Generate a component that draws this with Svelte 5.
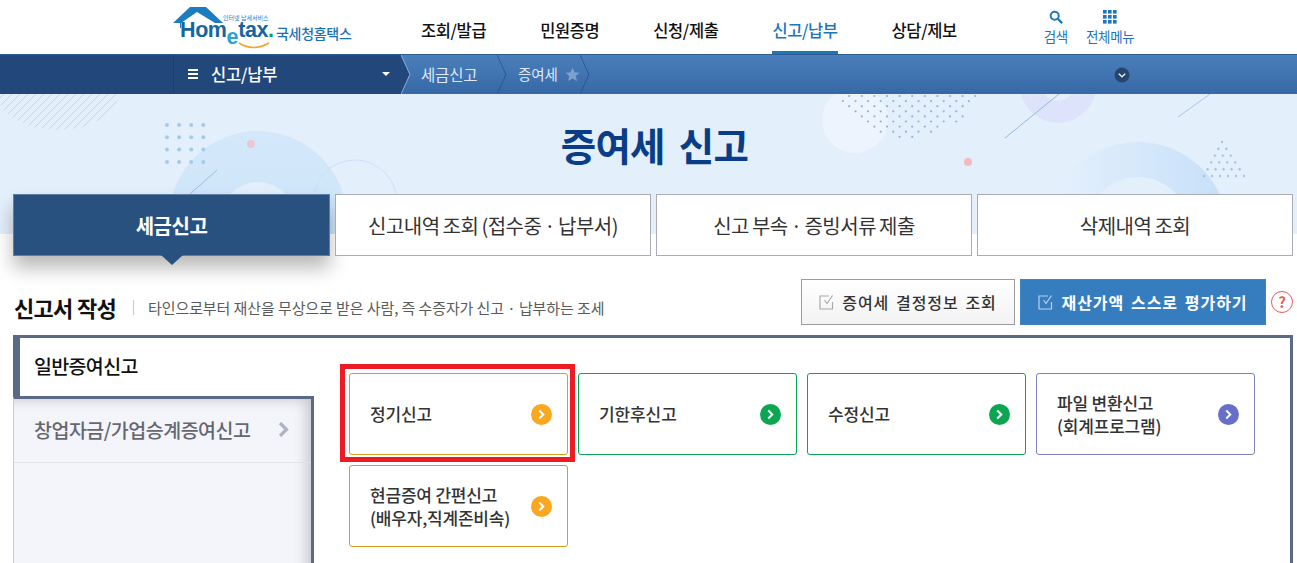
<script>
  const nav = [
    { label: '조회/발급' },
    { label: '민원증명' },
    { label: '신청/제출' },
    { label: '신고/납부', active: true },
    { label: '상담/제보' }
  ];
  const tabs = ['세금신고', '신고내역 조회 (접수중 · 납부서)', '신고 부속 · 증빙서류 제출', '삭제내역 조회'];
  const cards = [
    { lines: ['정기신고'], tone: 'gold', marked: true },
    { lines: ['기한후신고'], tone: 'green' },
    { lines: ['수정신고'], tone: 'green' },
    { lines: ['파일 변환신고', '(회계프로그램)'], tone: 'violet' },
    { lines: ['현금증여 간편신고', '(배우자,직계존비속)'], tone: 'gold' }
  ];
  const dotsA = [];
  for (let r = 0; r < 4; r++) for (let c = 0; c < 4; c++) dotsA.push([167 + c * 12.1, 125 + r * 12.3]);
  const dotsB = [];
  for (let r = 0; r < 9; r++) {
    const y = 96 + r * 5.1;
    const half = Math.sqrt(Math.max(0, 6400 - (y - 58) * (y - 58)));
    for (let x = -84 + (r % 2) * 6.3; x <= 84; x += 12.6) {
      if (Math.abs(x) < half) dotsB.push([908 + x, y]);
    }
  }
  const dotsC = [];
  for (let r = 0; r < 6; r++) {
    for (let c = 0; c <= r; c++) dotsC.push([1222 - r * 3.8 + c * 8 + r * 0.2, 142 + r * 6.8]);
  }
  const hatch = [];
  for (let i = 0; i < 17; i++) hatch.push(4 + i * 8);
</script>

<div class="page">
  <header class="top">
    <div class="logo">
      <svg class="house" viewBox="0 0 60 30" aria-hidden="true">
        <path d="M0 16 L17 0 L33 0 L50 16 L42 16 L24 5 L8 16 L8 21 L7 21 L7 16 Z" fill="#1c7cc0" />
      </svg>
      <span class="tagline">인터넷 납세서비스</span>
      <span class="wordmark">Hom<span class="e">e</span>tax<span class="dot">.</span></span>
      <svg class="smile" viewBox="0 0 32 7" aria-hidden="true">
        <path d="M1 1 Q15 10 31 1" fill="none" stroke="#f3a428" stroke-width="1.5" />
      </svg>
      <span class="brand">국세청홈택스</span>
    </div>
    <nav class="mainnav">
      {#each nav as n}
        <span class="navitem" class:active={n.active}>{n.label}</span>
      {/each}
    </nav>
    <div class="tools">
      <div class="tool">
        <svg viewBox="0 0 16 16" width="14" height="14" aria-hidden="true">
          <circle cx="6.5" cy="6.5" r="4.6" fill="none" stroke="#1b76bb" stroke-width="2.2" />
          <path d="M10 10 L15 15" stroke="#1b76bb" stroke-width="2.6" />
        </svg>
        <span>검색</span>
      </div>
      <div class="tool">
        <svg viewBox="0 0 14 14" width="14" height="14" aria-hidden="true">
          {#each [0, 5, 10] as y}
            {#each [0, 5, 10] as x}
              <rect {x} {y} width="3.6" height="3.6" fill="#1b76bb" />
            {/each}
          {/each}
        </svg>
        <span>전체메뉴</span>
      </div>
    </div>
  </header>

  <div class="crumbs">
    <div class="crumb-root">
      <span class="burger"><i></i><i></i><i></i></span>
      <span class="root-label">신고/납부</span>
      <span class="caret"></span>
    </div>
    <svg class="sep" viewBox="0 0 10 40" aria-hidden="true">
      <path d="M0 0 L9 20 L0 40 Z" fill="#22477a" />
      <path d="M0 0 L9 20 L0 40" fill="none" stroke="#8fb2d8" />
    </svg>
    <span class="crumb c1">세금신고</span>
    <svg class="sep" viewBox="0 0 10 40" aria-hidden="true">
      <path d="M0 0 L9 20 L0 40" fill="none" stroke="#2a5791" />
    </svg>
    <span class="crumb c2">증여세</span>
    <svg class="star" viewBox="0 0 20 20" width="15" height="15" aria-hidden="true">
      <path d="M10 1 L12.8 7 L19.3 7.7 L14.4 12 L15.8 18.5 L10 15.2 L4.2 18.5 L5.6 12 L0.7 7.7 L7.2 7 Z" fill="#7d9fc9" />
    </svg>
    <svg class="sep" viewBox="0 0 10 40" aria-hidden="true">
      <path d="M0 0 L9 20 L0 40" fill="none" stroke="#2a5791" />
    </svg>
    <span class="more">
      <svg viewBox="0 0 16 16" width="16" height="16" aria-hidden="true">
        <circle cx="8" cy="8" r="7.5" fill="#27466f" />
        <path d="M4.8 6.8 L8 9.8 L11.2 6.8" fill="none" stroke="#e8eef6" stroke-width="1.4" />
      </svg>
    </span>
  </div>

  <section class="hero">
    <svg class="deco" viewBox="0 94 1297 140" aria-hidden="true">
      <defs>
        <clipPath id="heroClip"><rect x="0" y="94" width="1297" height="140" /></clipPath>
        <clipPath id="hatchClip"><ellipse cx="58" cy="94" rx="60" ry="36" /></clipPath>
        <linearGradient id="arcR" gradientUnits="userSpaceOnUse" x1="1060" x2="1225" y1="0" y2="0">
          <stop offset="0" stop-color="#e4effc" />
          <stop offset="1" stop-color="#c6e0f9" />
        </linearGradient>
        <linearGradient id="arcL" x1="0" x2="0" y1="0" y2="1">
          <stop offset="0" stop-color="#d3e8fa" />
          <stop offset="1" stop-color="#c9e1f8" />
        </linearGradient>
      </defs>
      <g clip-path="url(#heroClip)">
        <g clip-path="url(#hatchClip)">
          {#each hatch as h}
            <path d={`M${h} 94 L${h - 40} 134`} stroke="#bcd7f2" stroke-width="1" />
          {/each}
        </g>
        <path fill-rule="evenodd" d="M169 220 A89 89 0 0 1 347 220 A89 89 0 0 1 169 220 Z M220 220 A38 38 0 0 0 296 220 A38 38 0 0 0 220 220 Z" fill="url(#arcL)" />
        <circle cx="355" cy="202" r="42" fill="none" stroke="#cfe0f6" stroke-width="1" />
        <path d="M190 194 L217 170" stroke="#9cbde3" stroke-width="1" />
        {#each dotsA as d}
          <circle cx={d[0]} cy={d[1]} r="2" fill="#a3cbe6" />
        {/each}
        <circle cx="251" cy="144" r="4" fill="#e8c6d4" />
        <circle cx="855" cy="120" r="33" fill="#edf4fd" />
        {#each dotsB as d}
          <circle cx={d[0]} cy={d[1]} r="1.1" fill="#8fb3df" />
        {/each}
        <path fill-rule="evenodd" d="M1020 85 A38 38 0 0 0 1096 85 A38 38 0 0 0 1020 85 Z M1040 81 A18 20 0 0 1 1076 81 A18 20 0 0 1 1040 81 Z" fill="#dde3fb" />
        <path d="M1005 138 L1059 94" stroke="#96b7e2" stroke-width="1" />
        <path d="M1178 117 L1210 94" stroke="#a6c3e8" stroke-width="1" />
        <circle cx="968" cy="162" r="4" fill="#f5b8bf" />
        <path fill-rule="evenodd" d="M1048 232 A90 90 0 0 1 1228 232 A90 90 0 0 1 1048 232 Z M1085 232 A53 55 0 0 0 1191 232 A53 55 0 0 0 1085 232 Z" fill="url(#arcR)" />
        {#each dotsC as d}
          <circle cx={d[0]} cy={d[1]} r="1.2" fill="#a6c1e2" />
        {/each}
      </g>
    </svg>
    <h1>증여세 신고</h1>
  </section>

  <div class="tabs">
    {#each tabs as t, i}
      <div class="tab" class:on={i === 0}>{t}</div>
    {/each}
  </div>

  <div class="sec-head">
    <h2>신고서 작성</h2>
    <span class="bar"></span>
    <p>타인으로부터 재산을 무상으로 받은 사람, 즉 수증자가 신고 · 납부하는 조세</p>
    <div class="actions">
      <button class="btn plain">
        <svg viewBox="0 0 16 16" width="16" height="16" aria-hidden="true">
          <path d="M13.5 8 V15 H1 V2 H10" fill="none" stroke="#aaa" stroke-width="1.2" />
          <path d="M5.5 6 L8 9.5 L13.5 1.5" fill="none" stroke="#aaa" stroke-width="1.2" />
        </svg>
        증여세 결정정보 조회
      </button>
      <button class="btn blue">
        <svg viewBox="0 0 16 16" width="16" height="16" aria-hidden="true">
          <path d="M13.5 8 V15 H1 V2 H10" fill="none" stroke="#b9d3ea" stroke-width="1.2" />
          <path d="M5.5 6 L8 9.5 L13.5 1.5" fill="none" stroke="#b9d3ea" stroke-width="1.2" />
        </svg>
        재산가액 스스로 평가하기
      </button>
      <span class="help">?</span>
    </div>
  </div>

  <div class="panel">
    <aside class="side">
      <div class="side-on">일반증여신고</div>
      <div class="side-rest">
        <div class="side-item">
          <span>창업자금/가업승계증여신고</span>
          <svg viewBox="0 0 11 15" width="11" height="15" aria-hidden="true">
            <path d="M2 1 L8.5 7.5 L2 14" fill="none" stroke="#b0b4c0" stroke-width="3.2" />
          </svg>
        </div>
      </div>
    </aside>
    <div class="cards">
      {#each cards as c}
        <div class="cardwrap" class:marked={c.marked}>
          <div class={`card ${c.tone}`}>
            <div class="cardtext" class:two={c.lines.length > 1}>
              {#each c.lines as l}<div>{l}</div>{/each}
            </div>
            <span class="go">
              <svg viewBox="0 0 10 12" width="9" height="11" aria-hidden="true">
                <path d="M2.5 1.5 L7 6 L2.5 10.5" fill="none" stroke="#fff" stroke-width="2.2" />
              </svg>
            </span>
          </div>
        </div>
      {/each}
    </div>
  </div>
</div>

<style>
  :global(body) {
    margin: 0;
    background: #fff;
    overflow: hidden;
  }
  .page {
    width: 1297px;
    height: 563px;
    overflow: hidden;
    font-family: "Noto Sans CJK KR", "Noto Sans", sans-serif;
    color: #222;
  }
  .top {
    height: 54px;
    display: flex;
    align-items: center;
  }
  .logo {
    width: 180px;
    height: 54px;
    margin-left: 173px;
    position: relative;
    flex: none;
  }
  .house {
    position: absolute;
    left: 0;
    top: 7px;
    width: 60px;
    height: 30px;
  }
  .tagline {
    position: absolute;
    left: 50px;
    top: 14px;
    font-size: 6px;
    line-height: 8px;
    color: #1c7cc0;
    white-space: nowrap;
  }
  .wordmark {
    position: absolute;
    left: 7px;
    top: 22px;
    font-family: "Liberation Sans", sans-serif;
    font-weight: 700;
    font-size: 21.5px;
    line-height: 16px;
    letter-spacing: -0.4px;
    color: #17659f;
    white-space: nowrap;
  }
  .wordmark .e {
    color: #2aa2d8;
    position: relative;
    top: 7px;
  }
  .wordmark .dot {
    color: #0da25a;
  }
  .smile {
    position: absolute;
    left: 65px;
    top: 42px;
    width: 32px;
    height: 7px;
  }
  .brand {
    position: absolute;
    left: 103px;
    top: 23px;
    font-size: 14px;
    font-weight: 500;
    line-height: 20px;
    letter-spacing: -0.3px;
    color: #1b72b2;
    white-space: nowrap;
  }
  .mainnav {
    margin-left: 68px;
    display: flex;
    height: 54px;
    gap: 54px;
    flex: none;
  }
  .navitem {
    box-sizing: border-box;
    height: 54px;
    line-height: 60px;
    font-size: 16.5px;
    font-weight: 500;
    letter-spacing: -0.4px;
    color: #111;
    white-space: nowrap;
  }
  .navitem.active {
    color: #1b76bb;
    border-bottom: 3px solid #1b76bb;
  }
  .tools {
    margin-left: 87px;
    display: flex;
    gap: 18px;
  }
  .tool {
    display: flex;
    flex-direction: column;
    align-items: center;
    font-size: 13.5px;
    line-height: 18px;
    color: #1b76bb;
    letter-spacing: -0.3px;
    gap: 3px;
  }
  .crumbs {
    height: 40px;
    display: flex;
    align-items: center;
    background: linear-gradient(#4a7fbb, #3768a6);
    border-top: 1px solid #2e5c93;
    box-sizing: border-box;
  }
  .crumb-root {
    width: 401px;
    height: 100%;
    box-sizing: border-box;
    background: linear-gradient(to right, #22477a 173px, #1c3d6c 173px, #1c3d6c 174px, #22477a 174px);
    display: flex;
    align-items: center;
    flex: none;
    color: #fff;
    padding-left: 188px;
    padding-bottom: 2px;
  }
  .burger {
    display: flex;
    flex-direction: column;
    gap: 2px;
    width: 10px;
    margin-right: 13px;
  }
  .burger i {
    height: 2px;
    background: #fff;
    display: block;
  }
  .root-label {
    font-size: 16.5px;
    font-weight: 500;
    letter-spacing: -0.2px;
  }
  .caret {
    width: 0;
    height: 0;
    margin-left: auto;
    margin-right: 11px;
    border-left: 4px solid transparent;
    border-right: 4px solid transparent;
    border-top: 4px solid #fff;
  }
  .sep {
    width: 10px;
    height: 39px;
    flex: none;
  }
  .crumb {
    color: #dfe9f5;
    padding-bottom: 2px;
  }
  .c1 {
    margin-left: 10px;
    width: 76px;
    font-size: 15.5px;
    letter-spacing: -0.15px;
    white-space: nowrap;
  }
  .c2 {
    margin-left: 11px;
    font-size: 14.5px;
    letter-spacing: -0.1px;
  }
  .star {
    margin-left: 7px;
    flex: none;
  }
  .more {
    margin-left: 524px;
    display: flex;
  }
  .hero {
    height: 140px;
    background: #e4effc;
    position: relative;
    overflow: hidden;
  }
  .deco {
    position: absolute;
    inset: 0;
    width: 100%;
    height: 100%;
  }
  h1 {
    position: relative;
    margin: 0;
    padding-top: 24px;
    padding-left: 12px;
    text-align: center;
    font-size: 38.5px;
    line-height: 52px;
    font-weight: 700;
    letter-spacing: -0.7px;
    color: #0a3d87;
    word-spacing: 6px;
  }
  .tabs {
    margin: -40px 4px 0 13px;
    display: grid;
    grid-template-columns: 317px repeat(3, 316px);
    gap: 5px;
    position: relative;
  }
  .tab {
    box-sizing: border-box;
    height: 62px;
    background: #fff;
    border: 1px solid #a9adb3;
    display: flex;
    align-items: center;
    justify-content: center;
    font-size: 20px;
    letter-spacing: -0.5px;
    word-spacing: -1px;
    color: #333;
    position: relative;
    white-space: nowrap;
  }
  .tab.on {
    background: #285180;
    border-color: #5c7ea4;
    color: #fff;
    font-weight: 700;
    box-shadow: 0 12px 18px rgba(0, 0, 0, 0.28);
  }
  .tab.on::after {
    content: "";
    position: absolute;
    left: 147px;
    top: 100%;
    border-left: 11px solid transparent;
    border-right: 11px solid transparent;
    border-top: 10px solid #285180;
  }
  .sec-head {
    margin: 23px 4px 0 14px;
    height: 56px;
    display: flex;
    align-items: center;
    position: relative;
  }
  h2 {
    margin: 0;
    font-size: 22px;
    font-weight: 700;
    letter-spacing: -0.7px;
    color: #111;
  }
  .bar {
    width: 1px;
    height: 15px;
    background: #c9c9c9;
    margin: 0 14px 0 17px;
  }
  p {
    margin: 0;
    font-size: 15px;
    letter-spacing: -0.09px;
    color: #5a5a5a;
    white-space: nowrap;
  }
  .actions {
    position: absolute;
    right: 0;
    top: 0;
    display: flex;
    align-items: center;
    gap: 5px;
  }
  .btn {
    font-family: inherit;
    height: 46px;
    box-sizing: border-box;
    display: flex;
    align-items: center;
    justify-content: center;
    gap: 7px;
    font-size: 16px;
    padding: 0;
    letter-spacing: 1px;
    word-spacing: 2px;
    cursor: pointer;
  }
  .btn.plain {
    width: 214px;
    border: 1px solid #9c9c9c;
    background: linear-gradient(#fff, #f3f3f3);
    color: #333;
    font-weight: 500;
  }
  .btn.blue {
    width: 246px;
    border: 1px solid #3d85c6;
    background: #367dbf;
    color: #fff;
    font-weight: 700;
  }
  .help {
    width: 22px;
    height: 22px;
    box-sizing: border-box;
    border: 1.5px solid #ea5a5f;
    border-radius: 50%;
    color: #ea5a5f;
    font-size: 15px;
    font-weight: 700;
    line-height: 19px;
    text-align: center;
  }
  .panel {
    margin: 0 4px 0 13px;
    box-sizing: border-box;
    height: 240px;
    border: 3px solid #5a6984;
    border-left-width: 0;
    border-bottom: none;
    display: flex;
    position: relative;
  }
  .side {
    width: 300.5px;
    flex: none;
    display: flex;
    flex-direction: column;
  }
  .side-on {
    box-sizing: border-box;
    height: 58px;
    border-left: 7px solid #5a6984;
    padding: 0 0 3px 14px;
    display: flex;
    align-items: center;
    font-size: 19.5px;
    font-weight: 500;
    letter-spacing: -0.65px;
    color: #111;
    background: #fff;
  }
  .side-rest {
    flex: 1;
    background: #f3f5fb;
    border-top: 3px solid #5a6984;
    border-right: 3px solid #5a6984;
    border-left: 1px solid #c9cdd6;
    box-shadow: inset -14px 10px 14px -10px rgba(0, 0, 0, 0.2);
  }
  .side-item {
    height: 64px;
    box-sizing: border-box;
    border-bottom: 1px solid #e0e2e8;
    display: flex;
    align-items: center;
    padding: 0 22px 2px 20px;
    justify-content: space-between;
    font-size: 19.5px;
    font-weight: 500;
    letter-spacing: -0.5px;
    color: #66686e;
  }
  .cards {
    display: grid;
    grid-template-columns: repeat(4, 219px);
    grid-auto-rows: 82px;
    gap: 10px;
    margin-left: 35.5px;
    padding-top: 35px;
    align-content: start;
  }
  .cardwrap {
    position: relative;
  }
  .cardwrap.marked::before {
    content: "";
    position: absolute;
    left: -9px;
    right: -7px;
    top: -9px;
    bottom: -7px;
    border: 5px solid #ed1c24;
    pointer-events: none;
  }
  .card {
    position: relative;
    box-sizing: border-box;
    height: 82px;
    border: 1px solid;
    border-radius: 3px;
    display: flex;
    align-items: center;
    justify-content: space-between;
    padding: 0 15px 0 20px;
    background: #fff;
    font-size: 17px;
    line-height: 23px;
    font-weight: 500;
    letter-spacing: -0.1px;
    color: #333;
  }
  .cardtext {
    padding-bottom: 2px;
    white-space: nowrap;
  }
  .cardtext.two {
    padding-bottom: 0;
    letter-spacing: -0.2px;
  }
  .gold { border-color: #d69e1d; }
  .green { border-color: #0ca652; }
  .violet { border-color: #7b82bd; }
  .go {
    width: 21px;
    height: 21px;
    border-radius: 50%;
    display: flex;
    align-items: center;
    justify-content: center;
    flex: none;
  }
  .gold .go { background: #fba81f; }
  .green .go { background: #0ca652; }
  .violet .go { background: #666fca; }
</style>
